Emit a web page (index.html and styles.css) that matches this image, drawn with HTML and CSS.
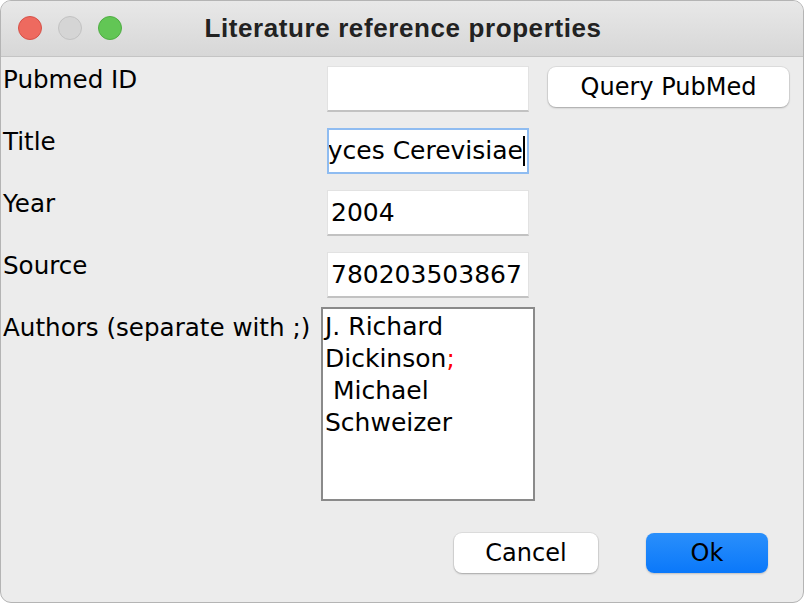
FILE: index.html
```html
<!DOCTYPE html>
<html>
<head>
<meta charset="utf-8">
<title>Literature reference properties</title>
<link rel="stylesheet" href="styles.css">
</head>
<body>
<div class="window">
  <div class="titlebar">
    <div class="lights">
      <span class="light red"></span>
      <span class="light gray"></span>
      <span class="light green"></span>
    </div>
    <div class="title">Literature reference properties</div>
  </div>
  <div class="content">
    <div class="form">
      <div class="label">Pubmed ID</div>
      <div class="field"></div>
      <div class="side"><button class="btn query">Query PubMed</button></div>

      <div class="label">Title</div>
      <div class="field focused"><span class="clip">yces Cerevisiae</span><span class="caret"></span></div>
      <div class="side"></div>

      <div class="label">Year</div>
      <div class="field">2004</div>
      <div class="side"></div>

      <div class="label">Source</div>
      <div class="field">780203503867</div>
      <div class="side"></div>

      <div class="label">Authors (separate with ;)</div>
      <div class="area">J. Richard<br>Dickinson<span class="semi">;</span><br>&nbsp;Michael<br>Schweizer</div>
      <div class="side"></div>
    </div>
    <div class="actions">
      <button class="btn cancel">Cancel</button>
      <button class="btn ok">Ok</button>
    </div>
  </div>
</div>
</body>
</html>
```

FILE: styles.css
```css
html, body {
  margin: 0;
  padding: 0;
  background: #ffffff;
}
.window {
  width: 802px;
  height: 601px;
  border: 1px solid #b4b4b4;
  border-radius: 11px;
  overflow: hidden;
  background: #ececec;
  font-family: "DejaVu Sans", sans-serif;
  color: #000;
  display: flex;
  flex-direction: column;
}
.titlebar {
  height: 55px;
  flex: none;
  background: linear-gradient(#e8e8e8, #d7d7d7);
  border-bottom: 1px solid #c4c4c4;
  display: flex;
  align-items: center;
  position: relative;
}
.lights {
  display: flex;
  gap: 16px;
  padding-left: 17px;
  margin-top: -1px;
}
.light {
  width: 24px;
  height: 24px;
  border-radius: 50%;
  box-sizing: border-box;
}
.red { background: #ee6a5f; border: 1px solid #d65148; }
.gray { background: #d5d5d5; border: 1px solid #c2c2c2; }
.green { background: #62c655; border: 1px solid #4fad43; }
.title {
  position: absolute;
  left: 0;
  right: 0;
  top: 0;
  bottom: 0;
  display: flex;
  align-items: center;
  justify-content: center;
  font-family: "Liberation Sans", sans-serif;
  font-weight: bold;
  font-size: 26px;
  letter-spacing: 0.6px;
  color: #222;
  padding-left: 2px;
  margin-top: 0;
}
.content {
  flex: 1;
  display: flex;
  flex-direction: column;
}
.form {
  display: grid;
  grid-template-columns: 318px 214px 1fr;
  grid-template-rows: 46px 46px 46px 46px 188px;
  row-gap: 16px;
  padding: 9px 0 0 2px;
}
.label {
  font-size: 24.6px;
  line-height: 28px;
}
.field {
  margin: 0 6px;
  background: #fff;
  border: 1px solid #e2e2e2;
  border-bottom: 2px solid #c2c2c2;
  font-size: 25px;
  line-height: 44px;
  padding: 0 3px;
  white-space: nowrap;
  overflow: hidden;
  display: flex;
  align-items: center;
}
.field.focused {
  border: 2px solid #8fbcf1;
  padding: 0 2px;
  justify-content: flex-end;
}
.clip { flex: none; }
.caret {
  flex: none;
  display: inline-block;
  width: 2px;
  height: 30px;
  background: #000;
}
.area {
  margin-top: -7px;
  background: #fff;
  border: 2px solid #8a8a8a;
  font-size: 25px;
  line-height: 32px;
  padding: 2px 0 0 2px;
  box-sizing: border-box;
  height: 194px;
}
.semi { color: #ff0000; }
.side {
  padding: 1px 0 0 13px;
}
.btn {
  font-family: "DejaVu Sans", sans-serif;
  font-size: 24px;
  color: #000;
  height: 40px;
  border-radius: 8px;
  background: #fff;
  border: none;
  box-shadow: 0 0 0 1px rgba(0,0,0,0.06), 0 1px 2px rgba(0,0,0,0.25);
  padding: 0;
}
.query { width: 241px; }
.actions {
  display: flex;
  justify-content: flex-end;
  padding: 31px 35px 0 0;
  gap: 48px;
}
.cancel { width: 144px; }
.ok {
  width: 122px;
  background: linear-gradient(#2a8ffb, #0a78fa);
  box-shadow: 0 1px 2px rgba(0,0,0,0.2);
}
```
